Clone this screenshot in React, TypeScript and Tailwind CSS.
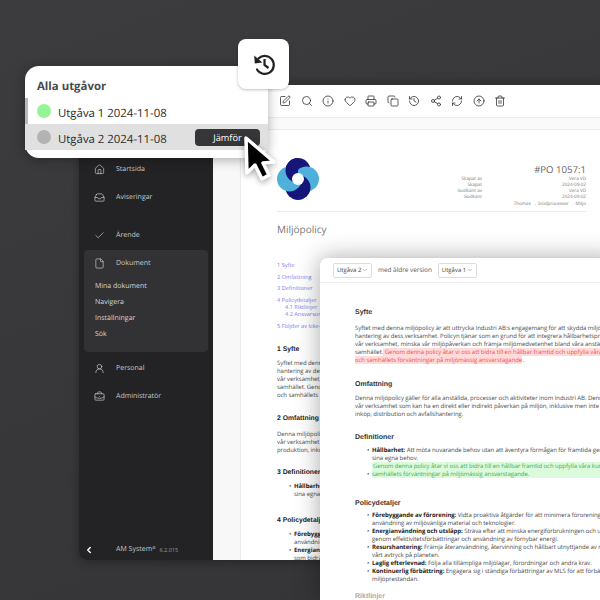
import { BriefcaseBusiness, Check, ChevronDown, ChevronLeft, CircleArrowUp, Copy, File, Heart, History, House, Inbox, Info, Printer, RefreshCw, Search, Share2, SquarePen, Trash2, UserRound } from 'lucide-react';
import { type ReactNode } from 'react';

const bodyFont = "font-['Open_Sans','Noto_Sans',sans-serif]";
const headFont = "font-['Liberation_Sans',Arial,sans-serif]";

function NavItem({ icon, label, className }: { icon: ReactNode; label: string; className: string }) {
  return (
    <div className={`flex items-center text-[7px] text-[#c9c9c9] ${className}`}>
      <span className="ml-[15px] mr-[11px] text-[#d4d4d4]">{icon}</span>
      <span className="pt-[3px]">{label}</span>
    </div>
  );
}

function Sidebar() {
  const ic = 'h-[11px] w-[11px]';
  return (
    <aside className={`flex h-full w-[134px] shrink-0 flex-col rounded-bl-lg bg-[#232325] pt-[83px] ${bodyFont}`}>
      <NavItem icon={<House className={ic} strokeWidth={1.4} />} label="Startsida" className="h-[12px]" />
      <NavItem icon={<Inbox className={ic} strokeWidth={1.4} />} label="Aviseringar" className="mt-[16px] h-[12px]" />
      <NavItem icon={<Check className={ic} strokeWidth={1.4} />} label="Ärende" className="mt-[26px] h-[12px]" />
      <div className="mx-[5px] mt-[9px] h-[102px] rounded bg-[#323234] pt-[7px]">
        <NavItem icon={<File className={ic} strokeWidth={1.4} />} label="Dokument" className="-ml-[5px] h-[12px]" />
        <div className="mt-[12px] flex flex-col gap-[4px] pl-[11px] text-[7px] leading-[12px] text-[#d6d6d6]">
          <span>Mina dokument</span>
          <span>Navigera</span>
          <span>Inställningar</span>
          <span>Sök</span>
        </div>
      </div>
      <NavItem icon={<UserRound className={ic} strokeWidth={1.4} />} label="Personal" className="mt-[10px] h-[12px]" />
      <NavItem icon={<BriefcaseBusiness className={ic} strokeWidth={1.4} />} label="Administratör" className="mt-[16px] h-[12px]" />
      <div className="mb-[5px] mt-auto flex items-center text-[7px] text-[#c9c9c9]">
        <ChevronLeft className="ml-[5px] h-[10px] w-[10px] text-white" strokeWidth={3.5} />
        <span className="ml-[22px]">AM System<sup className="text-[4px]">®</sup></span>
        <span className="ml-[4px] text-[5.5px] text-[#9a9a9a]">6.2.015</span>
      </div>
    </aside>
  );
}

function Logo() {
  return (
    <svg viewBox="0 0 42 42" className="h-[42px] w-[42px]">
      <defs>
        <clipPath id="logo-left">
          <rect x="0" y="0" width="21" height="42" />
        </clipPath>
      </defs>
      <circle cx="21" cy="12.5" r="12.5" fill="#15157a" />
      <circle cx="29.5" cy="21" r="12.5" fill="#4fb0dc" />
      <circle cx="21" cy="29.5" r="12.5" fill="#15157a" />
      <circle cx="12.5" cy="21" r="12.5" fill="#4fb0dc" />
      <circle cx="21" cy="12.5" r="12.5" fill="#15157a" clipPath="url(#logo-left)" />
      <circle cx="21" cy="21" r="6" fill="#fff" />
    </svg>
  );
}

function MetaRow({ label, value }: { label: string; value: string }) {
  return (
    <div className="flex h-[6.2px] items-center justify-end leading-none">
      <span className="w-[60px] text-right">{label}</span>
      <span className="w-[104px] text-right">{value}</span>
    </div>
  );
}

function DocHeading({ children, className }: { children: ReactNode; className: string }) {
  return <h2 className={`text-[6.8px] font-bold tracking-normal text-[#222] ${headFont} ${className}`}>{children}</h2>;
}

function SideBullet({ lead, rest }: { lead: string; rest: string }) {
  return (
    <li className="relative">
      <span className="absolute -left-[5px] text-[#222]">•</span>
      <b className="font-bold text-[#222]">{lead}</b>
      <br />
      {rest}
    </li>
  );
}

function Document() {
  const tools = [SquarePen, Search, Info, Heart, Printer, Copy, History, Share2, RefreshCw, CircleArrowUp, Trash2];
  return (
    <main className={`flex min-w-0 flex-1 flex-col overflow-hidden bg-white ${bodyFont}`}>
      <div className="h-[5px] shrink-0 bg-[#333335]" />
      <div className="flex h-[33px] shrink-0 items-center gap-[9.5px] border-b border-[#ececec] pl-[66px] text-[#333]">
        {tools.map((Icon, i) => <Icon key={i} className="h-[12px] w-[12px]" strokeWidth={1.6} />)}
      </div>
      <div className="h-[12px] shrink-0 border-b border-[#ececec] bg-[#fafafa]" />
      <div className="flex min-h-0 flex-1">
        <div className="w-[28px] shrink-0 border-r border-[#ececec] bg-[#f8f8f8]" />
        <div className="flex-1 overflow-hidden pl-[36px] pt-[34px]">
          <div className="flex h-[48px] w-[309px] items-start justify-between border-b border-[#ececec]">
            <div className="-mt-[6px]"><Logo /></div>
            <div className="text-[4.6px] text-[#777]">
              <div className="text-right text-[9.6px] leading-[12px] text-[#666]">#PO 1057:1</div>
              <MetaRow label="Skapat av" value="Vera VD" />
              <MetaRow label="Skapat" value="2024-09-02" />
              <MetaRow label="Godkänt av" value="Vera VD" />
              <MetaRow label="Godkänt" value="2024-09-02" />
              <div className="text-right leading-[6.2px]">Thomas → Stödprocesser → Miljö</div>
            </div>
          </div>
          <h1 className="mt-[11px] text-[10px] leading-[13px] text-[#777]">Miljöpolicy</h1>
          <div className="mt-[26px] text-[5.6px] leading-[7px] text-[#7d7df0]">
            <p>1 Syfte</p>
            <p className="mt-[4.5px]">2 Omfattning</p>
            <p className="mt-[4.5px]">3 Definitioner</p>
            <p className="mt-[4.5px]">4 Policydetaljer</p>
            <p className="pl-[8px]">4.1 Riktlinjer</p>
            <p className="pl-[8px]">4.2 Ansvarsområden</p>
            <p className="mt-[5px]">5 Följder av Icke-efterlevnad</p>
          </div>
          <div className="mt-[16px] whitespace-nowrap text-[6px] leading-[8px] tracking-[-0.01em] text-[#4a4a4a]">
            <DocHeading className="">1 Syfte</DocHeading>
            <div className="mt-[5px]">
              <p>Syftet med denna</p>
              <p>hantering av dess</p>
              <p>vår verksamhet, minska</p>
              <p>samhället. Genom</p>
              <p>och samhällets</p>
            </div>
            <DocHeading className="mt-[16px]">2 Omfattning</DocHeading>
            <div className="mt-[7px]">
              <p>Denna miljöpolicy</p>
              <p>vår verksamhet som</p>
              <p>produktion, inköp</p>
            </div>
            <DocHeading className="mt-[15px]">3 Definitioner</DocHeading>
            <ul className="mt-[5px] pl-[17px]">
              <SideBullet lead="Hållbarhet:" rest="sina egna behov" />
            </ul>
            <DocHeading className="mt-[19px]">4 Policydetaljer</DocHeading>
            <ul className="mt-[5px] pl-[17px]">
              <SideBullet lead="Förebyggande" rest="användning av" />
              <SideBullet lead="Energianvändning" rest="som bidrar" />
            </ul>
          </div>
        </div>
      </div>
    </main>
  );
}

function ComparePanel() {
  const Select = ({ label }: { label: string }) => (
    <span className="flex h-[15px] w-[39px] items-center justify-between rounded-[2px] border border-[#ddd] bg-white pl-[3px] pr-[3px] text-[6px] text-[#444]">
      {label}
      <ChevronDown className="h-[6px] w-[6px] text-[#777]" />
    </span>
  );
  const Bullet = ({ lead, rest, next }: { lead: string; rest: string; next?: string }) => (
    <li className="relative">
      <span className="absolute -left-[5px] text-[#222]">•</span>
      <b className="font-bold text-[#222]">{lead}</b> {rest}
      {next ? <><br />{next}</> : null}
    </li>
  );
  return (
    <section className={`absolute left-[320px] top-[258px] h-[342px] w-[300px] overflow-hidden rounded-tl-lg bg-white shadow-[0_0_24px_rgba(0,0,0,0.35)] ${bodyFont}`}>
      <div className="flex h-[25px] items-center border-b border-[#eee] pl-[13px] text-[#555]">
        <Select label="Utgåva 2" />
        <span className="ml-[6px] text-[6.4px]">med äldre version</span>
        <span className="ml-[6px]"><Select label="Utgåva 1" /></span>
      </div>
      <div className="whitespace-nowrap pl-[35px] pt-[26px] text-[6px] leading-[8px] tracking-[-0.01em] text-[#4a4a4a]">
        <h2 className={`text-[7px] font-bold tracking-normal text-[#333] ${headFont}`}>Syfte</h2>
        <div className="mt-[7px]">
          <p>Syftet med denna miljöpolicy är att uttrycka Industri AB:s engagemang för att skydda miljön</p>
          <p>hantering av dess verksamhet. Policyn tjänar som en grund för att integrera hållbarhetsprinciper</p>
          <p>vår verksamhet, minska vår miljöpåverkan och främja miljömedvetenhet bland våra anställda</p>
          <p>samhället.<span className="bg-[#ffdcdc] text-[#f0504f]"> Genom denna policy åtar vi oss att bidra till en hållbar framtid och uppfylla våra kunders</span></p>
          <p><span className="bg-[#ffdcdc] text-[#f0504f]">och samhällets förväntningar på miljömässig ansvarstagande</span>.</p>
        </div>
        <h2 className={`mt-[17px] text-[7px] font-bold tracking-normal text-[#333] ${headFont}`}>Omfattning</h2>
        <div className="mt-[5px]">
          <p>Denna miljöpolicy gäller för alla anställda, processer och aktiviteter inom Industri AB. Denna</p>
          <p>vår verksamhet som kan ha en direkt eller indirekt påverkan på miljön, inklusive men inte begränsat</p>
          <p>inköp, distribution och avfallshantering.</p>
        </div>
        <h2 className={`mt-[16px] text-[7px] font-bold tracking-normal text-[#333] ${headFont}`}>Definitioner</h2>
        <ul className="mt-[4px] pl-[17px]">
          <Bullet lead="Hållbarhet:" rest="Att möta nuvarande behov utan att äventyra förmågan för framtida generationer" next="sina egna behov." />
          <li className="bg-[#dcfbdc] pl-[1px] text-[#3fae49]">Genom denna policy åtar vi oss att bidra till en hållbar framtid och uppfylla våra kunders</li>
          <li className="relative bg-[#dcfbdc] text-[#3fae49]">
            <span className="absolute -left-[5px] text-[#222]">•</span>
            samhällets förväntningar på miljömässig ansvarstagande.
          </li>
        </ul>
        <h2 className={`mt-[22px] text-[7px] font-bold tracking-normal text-[#333] ${headFont}`}>Policydetaljer</h2>
        <ul className="mt-[3px] pl-[17px]">
          <Bullet lead="Förebyggande av förorening:" rest="Vidta proaktiva åtgärder för att minimera förorening genom" next="användning av miljövänliga material och teknologier." />
          <Bullet lead="Energianvändning och utsläpp:" rest="Sträva efter att minska energiförbrukningen och utsläpp" next="genom effektivitetsförbättringar och användning av förnybar energi." />
          <Bullet lead="Resurshantering:" rest="Främja återanvändning, återvinning och hållbart utnyttjande av resurser för" next="vårt avtryck på planeten." />
          <Bullet lead="Laglig efterlevnad:" rest="Följa alla tillämpliga miljölagar, förordningar och andra krav." />
          <Bullet lead="Kontinuerlig förbättring:" rest="Engagera sig i ständiga förbättringar av MLS för att förbättra" next="miljöprestandan." />
        </ul>
        <h2 className={`mt-[10px] text-[7px] font-bold tracking-normal text-[#aaa] ${headFont}`}>Riktlinjer</h2>
      </div>
    </section>
  );
}

function VersionsPopup() {
  return (
    <div className={`absolute left-[25px] top-[66px] h-[92px] w-[243px] rounded-[14px] bg-white pt-[12px] shadow-[0_2px_12px_rgba(0,0,0,0.3)] ${bodyFont}`}>
      <h3 className="pl-[12px] text-[11.4px] font-bold leading-[17px] text-[#4a4a4a]">Alla utgåvor</h3>
      <div className="mt-[3px] flex h-[26px] items-center border-l-[3px] border-[#b9b9b9] pl-[9px] text-[11.4px] text-[#2c2c2c]">
        <span className="mr-[7px] h-[14px] w-[14px] rounded-full bg-[#95f595]" />
        <span className="mt-[6px]">Utgåva 1 2024-11-08</span>
      </div>
      <div className="flex h-[26px] items-center bg-[#e0e0e0] pl-[12px] text-[11.4px] text-[#2c2c2c]">
        <span className="mr-[7px] h-[14px] w-[14px] rounded-full bg-[#b3b3b3]" />
        <span className="mt-[6px]">Utgåva 2 2024-11-08</span>
        <span className="ml-auto mr-[8px] flex h-[17px] w-[65px] items-center justify-center rounded-[4px] bg-[#363638] pt-[1px] text-[9.2px] text-white">Jämför</span>
      </div>
    </div>
  );
}

export default function App() {
  return (
    <div className="relative h-[600px] w-[600px] overflow-hidden bg-[linear-gradient(160deg,#3c3c3e_0%,#343436_100%)] [text-rendering:geometricPrecision]">
      <div className="absolute left-[79px] top-[80px] flex h-[480px] w-[521px] overflow-hidden rounded-bl-lg shadow-[0_2px_8px_rgba(0,0,0,0.3)]">
        <Sidebar />
        <Document />
      </div>
      <ComparePanel />
      <VersionsPopup />
      <div className="absolute left-[238px] top-[39px] flex h-[50px] w-[51px] items-center justify-center rounded-[8px] bg-white shadow-[0_1px_3px_rgba(0,0,0,0.25)]">
        <svg viewBox="0 0 24 24" className="h-[24px] w-[24px] text-[#222]">
          <path d="M6.6 6.4A9 9 0 1 1 5 17.5" fill="none" stroke="currentColor" strokeWidth="2.2" strokeLinecap="round" />
          <path d="M2.2 3.6 2.8 11.4 10.4 10.4Z" fill="currentColor" />
          <path d="M12.5 7v6l4 3" fill="none" stroke="currentColor" strokeWidth="2.2" />
        </svg>
      </div>
      <svg viewBox="0 0 44 54" className="absolute left-[240px] top-[132px] h-[54px] w-[44px] drop-shadow-[0_2px_3px_rgba(0,0,0,0.35)]">
        <path d="M6 6 7 41 15 33 22 47 29 43 23 31 34 30Z" fill="#000" stroke="#fff" strokeWidth="3.5" strokeLinejoin="round" />
      </svg>
    </div>
  );
}
